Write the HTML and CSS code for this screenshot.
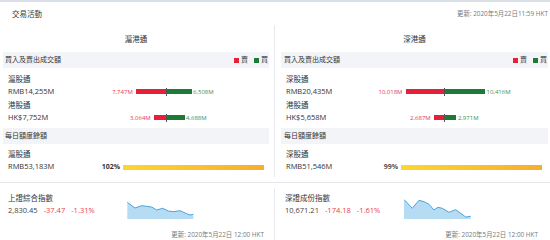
FILE: index.html
```html
<!DOCTYPE html>
<html lang="zh-Hant">
<head>
<meta charset="utf-8">
<title>交易活動</title>
<link rel="stylesheet" href="styles.css">
</head>
<body>
<div class="widget">
  <div class="topbar">
    <span class="title">交易活動</span>
    <span class="stamp">更新: 2020年5月22日11:59 HKT</span>
  </div>

  <div class="markets">
    <section class="market">
      <div class="market-title">滬港通</div>
      <div class="sec-head">
        <span>買入及賣出成交額</span>
        <span class="legend"><i class="sq sq--sell"></i>賣<i class="sq sq--buy"></i>買</span>
      </div>
      <div class="flows">
        <div class="flow">
          <div class="name"><div>滬股通</div><div>RMB14,255M</div></div>
          <div class="chart">
            <div class="half half--sell"><span class="lbl lbl--sell">7,747M</span><span class="bar bar--sell" style="width:29.7px"></span></div>
            <span class="axis"></span>
            <div class="half"><span class="bar bar--buy" style="width:25px"></span><span class="lbl lbl--buy">6,508M</span></div>
          </div>
        </div>
        <div class="flow">
          <div class="name"><div>港股通</div><div>HK$7,752M</div></div>
          <div class="chart">
            <div class="half half--sell"><span class="lbl lbl--sell">3,064M</span><span class="bar bar--sell" style="width:11.8px"></span></div>
            <span class="axis"></span>
            <div class="half"><span class="bar bar--buy" style="width:18px"></span><span class="lbl lbl--buy">4,688M</span></div>
          </div>
        </div>
      </div>
      <div class="sec-head"><span>每日額度餘額</span></div>
      <div class="quota">
        <div class="name"><div>滬股通</div><div>RMB53,183M</div></div>
        <span class="pct">102%</span>
        <div class="track"><div class="fill" style="width:100%"></div></div>
      </div>
    </section>

    <section class="market market--right">
      <div class="market-title">深港通</div>
      <div class="sec-head">
        <span>買入及賣出成交額</span>
        <span class="legend"><i class="sq sq--sell"></i>賣<i class="sq sq--buy"></i>買</span>
      </div>
      <div class="flows">
        <div class="flow">
          <div class="name"><div>深股通</div><div>RMB20,435M</div></div>
          <div class="chart">
            <div class="half half--sell"><span class="lbl lbl--sell">10,018M</span><span class="bar bar--sell" style="width:38.5px"></span></div>
            <span class="axis"></span>
            <div class="half"><span class="bar bar--buy" style="width:40px"></span><span class="lbl lbl--buy">10,416M</span></div>
          </div>
        </div>
        <div class="flow">
          <div class="name"><div>港股通</div><div>HK$5,658M</div></div>
          <div class="chart">
            <div class="half half--sell"><span class="lbl lbl--sell">2,687M</span><span class="bar bar--sell" style="width:10.3px"></span></div>
            <span class="axis"></span>
            <div class="half"><span class="bar bar--buy" style="width:11.4px"></span><span class="lbl lbl--buy">2,971M</span></div>
          </div>
        </div>
      </div>
      <div class="sec-head"><span>每日額度餘額</span></div>
      <div class="quota">
        <div class="name"><div>深股通</div><div>RMB51,546M</div></div>
        <span class="pct pct--soft">99%</span>
        <div class="track"><div class="fill" style="width:99%"></div></div>
      </div>
    </section>
  </div>

  <div class="indices">
    <section class="index">
      <div class="index-row">
        <div class="index-info">
          <div class="index-name">上證綜合指數</div>
          <div class="index-vals"><span>2,830.45</span><span class="neg">-37.47</span><span class="neg">-1.31%</span></div>
        </div>
        <svg class="spark" viewBox="0 0 67 20" aria-hidden="true">
          <polygon class="spark-area" points="0.3,3.3 8,9 14.7,6.7 19.7,7.3 24.7,8 29.7,11 35.7,9.3 41.3,12 46.3,12.7 53,11.7 59.7,14.7 63,16 66.3,15.3 66.3,20 0.3,20"/>
          <polyline class="spark-line" points="0.3,3.3 8,9 14.7,6.7 19.7,7.3 24.7,8 29.7,11 35.7,9.3 41.3,12 46.3,12.7 53,11.7 59.7,14.7 63,16 66.3,15.3"/>
        </svg>
      </div>
      <div class="stamp stamp--bottom">更新: 2020年5月22日 12:00 HKT</div>
    </section>

    <section class="index index--right">
      <div class="index-row">
        <div class="index-info">
          <div class="index-name">深證成份指數</div>
          <div class="index-vals"><span>10,671.21</span><span class="neg">-174.18</span><span class="neg">-1.61%</span></div>
        </div>
        <svg class="spark" viewBox="0 0 67 20" aria-hidden="true">
          <polygon class="spark-area" points="0,0.5 8.3,9.3 15,1.3 20,2.7 25,5.3 30,11 34,8.3 38.3,9.3 45,13.3 51.7,10.7 56.7,14.3 61.7,18 66.7,17.3 66.7,20 0,20"/>
          <polyline class="spark-line" points="0,0.5 8.3,9.3 15,1.3 20,2.7 25,5.3 30,11 34,8.3 38.3,9.3 45,13.3 51.7,10.7 56.7,14.3 61.7,18 66.7,17.3"/>
        </svg>
      </div>
      <div class="stamp stamp--bottom">更新: 2020年5月22日 12:00 HKT</div>
    </section>
  </div>
</div>
</body>
</html>
```

FILE: styles.css
```css
* { box-sizing: border-box; margin: 0; padding: 0; }

body {
  margin: 0;
  background: #fff;
  font-family: "Open Sans", "Noto Sans CJK TC", sans-serif;
  color: #333;
}

.widget {
  width: 550px;
  border-top: 2px solid #d9e0e8;
}

.topbar {
  height: 23px;
  display: flex;
  align-items: center;
  justify-content: space-between;
  padding: 0 2px 0 12px;
}

.title {
  font-size: 7.5px;
  line-height: 10px;
  color: #3a3a3a;
}

.stamp {
  font-size: 6.4px;
  line-height: 10px;
  color: #7a7a7a;
  white-space: nowrap;
}

.markets {
  display: flex;
  padding-bottom: 5px;
  border-bottom: 1px solid #e3e7ec;
}

.market {
  width: 275px;
  padding: 0 5px 4.75px 3px;
  border-right: 1px solid #e6eaef;
}

.market--right {
  padding: 0 2px 4.75px 6px;
  border-right: 0;
}

.market-title {
  font-size: 7.5px;
  line-height: 11px;
  text-align: center;
  padding: 9px 0 7px;
  color: #333;
}

.sec-head {
  height: 16px;
  background: #f2f4f7;
  display: flex;
  align-items: center;
  justify-content: space-between;
  padding: 0 1px 0 2px;
  font-size: 7px;
  line-height: 16px;
  color: #333;
}

.market--right .sec-head { padding-left: 3px; }

.legend {
  display: flex;
  align-items: center;
}

.sq {
  display: inline-block;
  width: 5px;
  height: 5px;
  margin-right: 2px;
}

.sq--sell { background: #e3223a; }
.sq--buy { background: #1d7b37; margin-left: 6px; }

.flows { padding: 6.25px 0 4.75px; }

.flow { display: flex; }
.flow + .flow { margin-top: 3px; }

.name {
  width: 60px;
  flex: none;
  padding-left: 5px;
  font-size: 7.5px;
  line-height: 11.5px;
  white-space: nowrap;
  color: #333;
}

.chart {
  flex: 1;
  display: flex;
  align-items: center;
  align-self: flex-end;
  height: 11.5px;
}

.half {
  flex: 1;
  display: flex;
  align-items: center;
}

.half--sell { justify-content: flex-end; }

.bar { display: block; height: 5px; }
.bar--sell { background: #e3223a; }
.bar--buy { background: #1d7b37; }

.axis {
  display: block;
  width: 1px;
  height: 8px;
  background: #555;
}

.lbl {
  font-size: 6px;
  line-height: 8px;
  white-space: nowrap;
}

.lbl--sell { color: #e6394d; margin-right: 3px; }
.lbl--buy { color: #3f8e55; margin-left: 1.5px; }

.quota {
  display: flex;
  padding: 5.25px 5px 0 0;
}

.pct {
  width: 57px;
  flex: none;
  text-align: right;
  font-weight: 700;
  font-size: 7px;
  line-height: 11.5px;
  align-self: flex-end;
  color: #333;
}

.pct--soft { color: #555; }

.track {
  flex: 1;
  margin-left: 3px;
  height: 5px;
  align-self: flex-end;
  margin-bottom: 2px;
}

.fill {
  height: 100%;
  background: linear-gradient(90deg, #fdd630, #f6ae2e);
}

.indices { display: flex; }

.index {
  width: 275px;
  min-height: 60px;
  margin-top: 5px;
  padding: 5.25px 10px 0 8px;
  border-right: 1px solid #e6eaef;
}

.index--right {
  padding: 5.25px 12px 0 10px;
  border-right: 0;
}

.index-row { display: flex; }

.index-info { width: 119px; flex: none; }

.index-name,
.index-vals {
  font-size: 7.5px;
  line-height: 11.5px;
  white-space: nowrap;
}

.index-vals {
  display: flex;
  gap: 6px;
  color: #444;
}

.neg { color: #e8414f; }

.spark {
  display: block;
  width: 67px;
  height: 20px;
  margin-top: 5.75px;
}

.spark-area { fill: #b6dcf3; }
.spark-line { fill: none; stroke: #4aa5dd; stroke-width: 1; stroke-linejoin: round; }

.stamp--bottom {
  text-align: right;
  margin-top: 11px;
}
```
